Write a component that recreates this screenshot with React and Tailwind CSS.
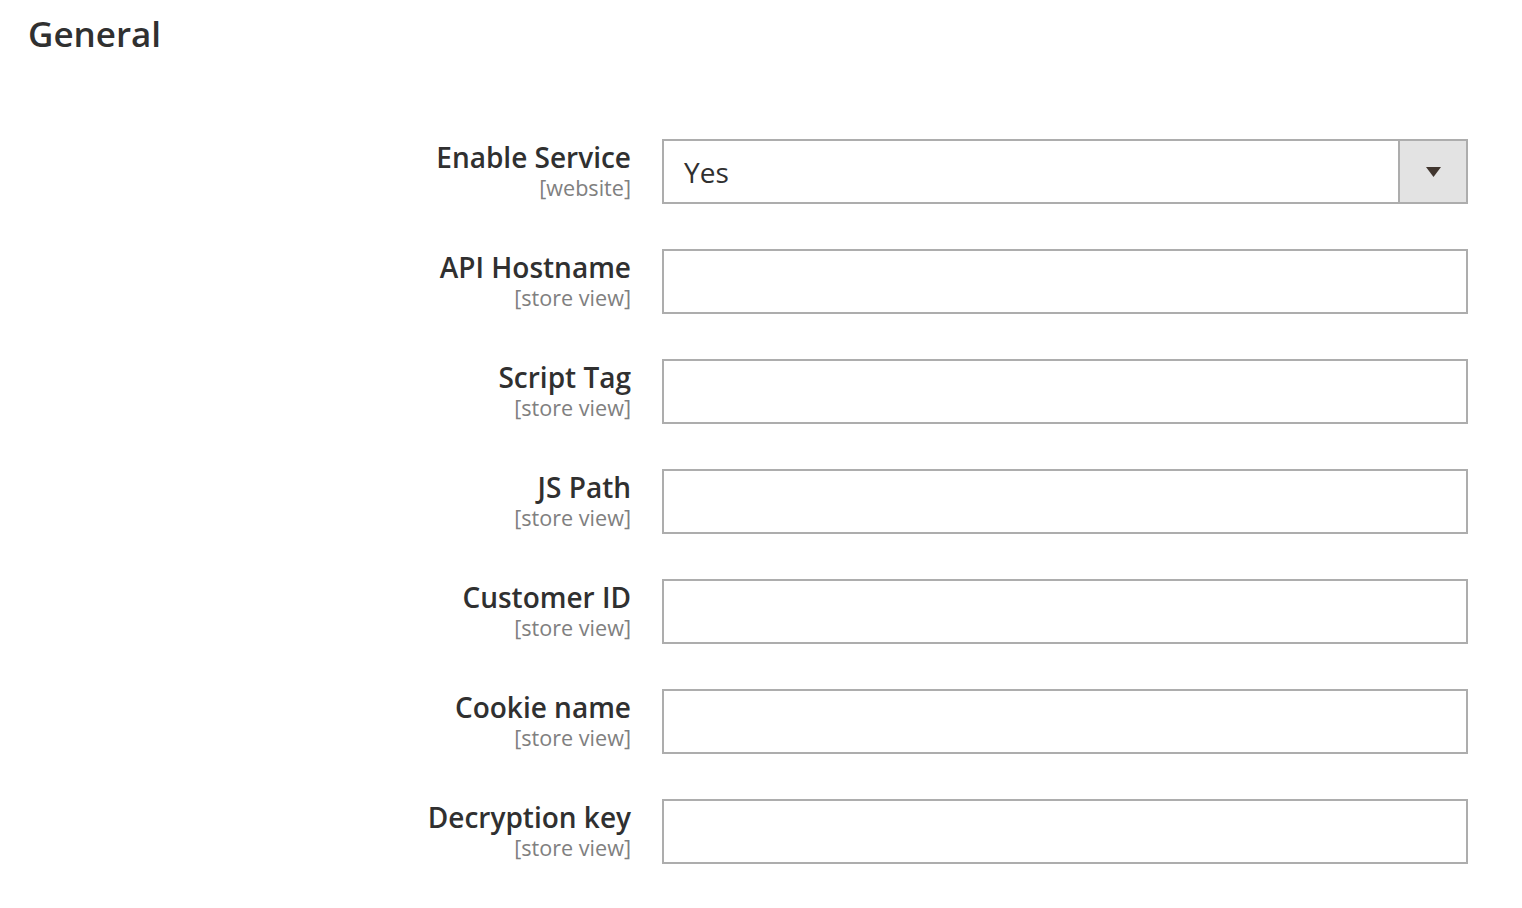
import { useState } from "react";

const fields = [
  { label: "API Hostname", scope: "[store view]" },
  { label: "Script Tag", scope: "[store view]" },
  { label: "JS Path", scope: "[store view]" },
  { label: "Customer ID", scope: "[store view]" },
  { label: "Cookie name", scope: "[store view]" },
  { label: "Decryption key", scope: "[store view]" },
];

function Label({ label, scope }) {
  return (
    <div className="w-[631px] shrink-0 pt-[3px] text-right">
      <div className="text-[28px] leading-[30px] font-semibold text-[#303030]">{label}</div>
      <div className="mt-[3px] text-[21.6px] leading-[26px] text-[#808080]">{scope}</div>
    </div>
  );
}

export default function App() {
  const [values, setValues] = useState({});

  return (
    <div
      className="min-h-screen bg-white"
      style={{ fontFamily: '"Open Sans", "Noto Sans", sans-serif' }}
    >
      <h1 className="pl-[28px] pt-[14px] text-[35px] leading-[40px] font-semibold text-[#303030]">
        General
      </h1>

      <div className="mt-[85px] flex flex-col gap-[45px]">
        <div className="flex gap-[31px]">
          <Label label="Enable Service" scope="[website]" />
          <div className="flex h-[65px] w-[806px] border-2 border-[#adadad] bg-white">
            <div className="flex flex-1 items-center pl-[20px] text-[28px] text-[#303030]">Yes</div>
            <div className="flex w-[68px] items-center justify-center border-l-2 border-[#adadad] bg-[#e3e3e3]">
              <svg width="15" height="10" viewBox="0 0 15 10">
                <path d="M0 0 H15 L7.5 10 Z" fill="#41362f" />
              </svg>
            </div>
          </div>
        </div>

        {fields.map((f) => (
          <div key={f.label} className="flex gap-[31px]">
            <Label label={f.label} scope={f.scope} />
            <input
              value={values[f.label] || ""}
              onChange={(e) => setValues({ ...values, [f.label]: e.target.value })}
              className="h-[65px] w-[806px] border-2 border-[#adadad] bg-white px-[20px] text-[28px] text-[#303030] outline-none"
            />
          </div>
        ))}
      </div>
    </div>
  );
}
